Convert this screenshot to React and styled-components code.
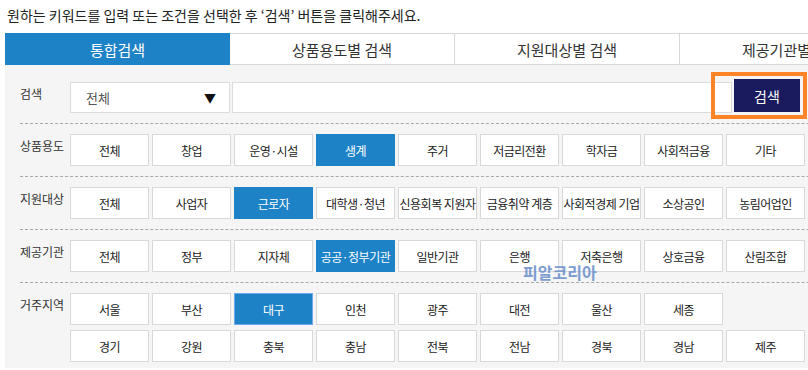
import React from "react";
import styled, { createGlobalStyle } from "styled-components";

const GlobalStyle = createGlobalStyle`
  body {
    margin: 0;
    background: #fff;
    font-family: "Noto Sans CJK KR", "Noto Sans", sans-serif;
    color: #333;
  }
`;

const tabs = ["통합검색", "상품용도별 검색", "지원대상별 검색", "제공기관별 검색"];

const sections = [
  {
    label: "상품용도",
    rows: [["전체", "창업", "운영·시설", "생계", "주거", "저금리전환", "학자금", "사회적금융", "기타"]],
    active: "생계",
  },
  {
    label: "지원대상",
    rows: [["전체", "사업자", "근로자", "대학생·청년", "신용회복 지원자", "금융취약 계층", "사회적경제 기업", "소상공인", "농림어업인", "기타"]],
    active: "근로자",
  },
  {
    label: "제공기관",
    rows: [["전체", "정부", "지자체", "공공·정부기관", "일반기관", "은행", "저축은행", "상호금융", "산림조합"]],
    active: "공공·정부기관",
  },
  {
    label: "거주지역",
    rows: [
      ["서울", "부산", "대구", "인천", "광주", "대전", "울산", "세종"],
      ["경기", "강원", "충북", "충남", "전북", "전남", "경북", "경남", "제주"],
    ],
    active: "대구",
    focus: true,
    last: true,
  },
];

const App = () => {
  return (
    <Page>
      <GlobalStyle />
      <Heading>원하는 키워드를 입력 또는 조건을 선택한 후 ‘검색’ 버튼을 클릭해주세요.</Heading>
      <TabBar>
        {tabs.map((t, i) => (
          <Tab key={t} $active={i === 0}>{t}</Tab>
        ))}
      </TabBar>
      <Panel>
        <SearchSection>
          <Label>검색</Label>
          <Select>
            <span>전체</span>
            <Arrow>▼</Arrow>
          </Select>
          <Keyword type="text" />
          <ButtonSpot>
            <SearchButton>검색</SearchButton>
            <Highlight />
          </ButtonSpot>
        </SearchSection>
        {sections.map((s) => (
          <Section key={s.label} $last={s.last}>
            <Label>{s.label}</Label>
            <Rows>
              {s.rows.map((row, i) => (
                <Row key={i}>
                  {row.map((item) => (
                    <Option
                      key={item}
                      $active={item === s.active}
                      $focus={item === s.active && s.focus}
                    >
                      {item}
                    </Option>
                  ))}
                </Row>
              ))}
            </Rows>
          </Section>
        ))}
        <Watermark>피알코리아</Watermark>
      </Panel>
    </Page>
  );
};

const Page = styled.div`
  width: 808px;
  height: 370px;
  overflow: hidden;
  padding-left: 5px;
  box-sizing: border-box;
`;

const Heading = styled.div`
  height: 33px;
  box-sizing: border-box;
  padding: 5px 0 0 2px;
  font-size: 14px;
  line-height: 20px;
  letter-spacing: 0;
  color: #222;
  white-space: nowrap;
`;

const TabBar = styled.div`
  display: flex;
  width: 1000px;
`;

const Tab = styled.div`
  flex: 0 0 225px;
  height: 32px;
  box-sizing: border-box;
  display: flex;
  align-items: center;
  justify-content: center;
  font-size: 15px;
  color: ${(p) => (p.$active ? "#fff" : "#333")};
  background: ${(p) => (p.$active ? "#1e82c6" : "#fff")};
  border: 1px solid ${(p) => (p.$active ? "#1e82c6" : "#d8d8d8")};
  border-left-width: ${(p) => (p.$active ? "1px" : "0")};
`;

const Panel = styled.div`
  position: relative;
  width: 1000px;
  background: #f5f5f5;
  padding-left: 15px;
  height: 303px;
  box-sizing: border-box;
`;

const SearchSection = styled.div`
  display: flex;
  align-items: flex-start;
  padding: 17px 0 10px;
  border-bottom: 1px dashed #a8a8a8;
`;

const Section = styled.div`
  display: flex;
  align-items: flex-start;
  padding: ${(p) => (p.$last ? "10px 0 5px" : "10px 0")};
  border-bottom: ${(p) => (p.$last ? "none" : "1px dashed #a8a8a8")};
`;

const Label = styled.div`
  flex: 0 0 50px;
  font-size: 12px;
  line-height: 14px;
  padding-top: 5px;
  color: #333;
`;

const Select = styled.div`
  width: 160px;
  height: 31px;
  box-sizing: border-box;
  background: #fff;
  border: 1px solid #dcdcdc;
  display: flex;
  align-items: center;
  justify-content: space-between;
  padding: 0 13px 0 15px;
  font-size: 13px;
  color: #555;
`;

const Arrow = styled.span`
  font-size: 12px;
  color: #111;
`;

const Keyword = styled.input`
  width: 500px;
  height: 31px;
  box-sizing: border-box;
  margin: 0 0 0 2px;
  border: 1px solid #dcdcdc;
  background: #fff;
  outline: none;
`;

const ButtonSpot = styled.div`
  position: relative;
  margin-left: 2px;
  margin-top: -3px;
`;

const SearchButton = styled.button`
  width: 66px;
  height: 33px;
  border: none;
  background: #1a1b5f;
  color: #fff;
  font-family: "Noto Sans CJK KR", sans-serif;
  font-size: 14px;
  padding: 0;
`;

const Highlight = styled.div`
  position: absolute;
  left: -23px;
  top: -7px;
  width: 96px;
  height: 47px;
  box-sizing: border-box;
  border: 4px solid #ff8427;
  pointer-events: none;
`;

const Rows = styled.div`
  display: flex;
  flex-direction: column;
  gap: 5px;
`;

const Row = styled.div`
  display: flex;
  gap: 3px;
`;

const Option = styled.div`
  flex: 0 0 79px;
  height: 32px;
  box-sizing: border-box;
  display: flex;
  align-items: center;
  justify-content: center;
  font-size: 12px;
  letter-spacing: -0.5px;
  white-space: nowrap;
  background: ${(p) => (p.$active ? "#1e82c6" : "#fff")};
  color: ${(p) => (p.$active ? "#fff" : "#222")};
  border: 1px solid ${(p) => (p.$focus ? "#6fa8ee" : p.$active ? "#1e82c6" : "#d8d8d8")};
`;

const Watermark = styled.div`
  position: absolute;
  left: 518px;
  top: 195px;
  font-size: 16px;
  font-weight: 700;
  color: #6f93cc;
  opacity: 0.9;
`;

export default App;
